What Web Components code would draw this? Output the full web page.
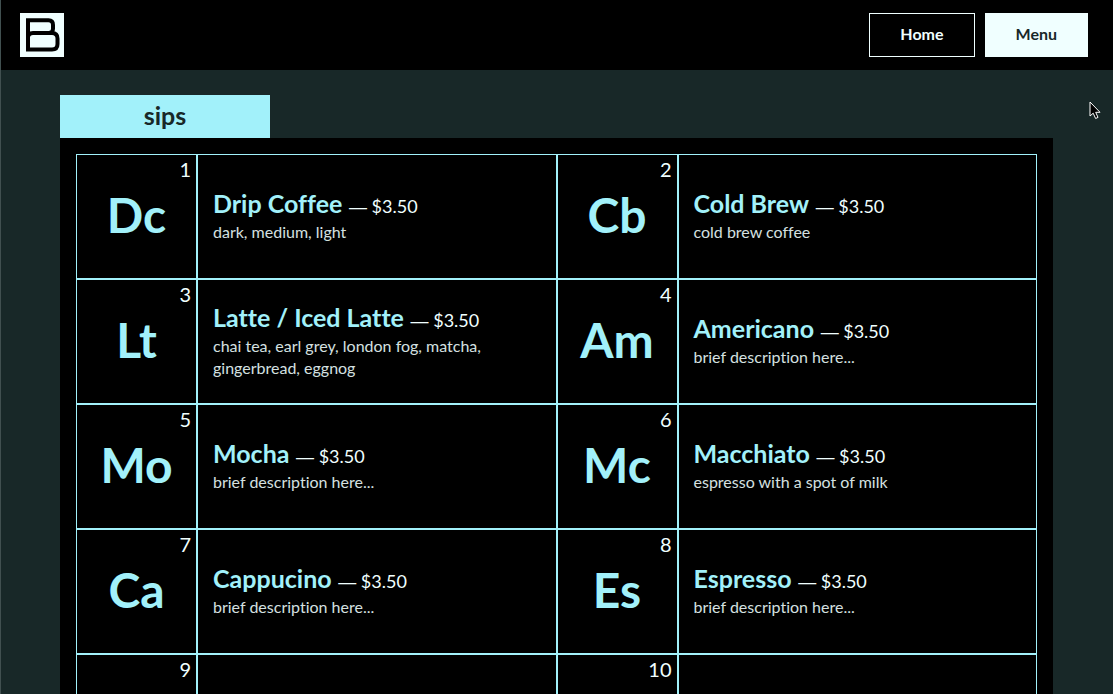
<!DOCTYPE html>
<html lang="en">
<head>
<meta charset="utf-8">
<title>Menu</title>
<style>
html { --ink: #182828; --cyan: #a2f1fa; --ice: #f0ffff; height: 100%; background: #182828; }
body { margin: 0; height: 100%; box-sizing: border-box; overflow: hidden; border-left: 1px solid #415050; font-family: Lato, "Liberation Sans", sans-serif; font-variant-ligatures: none; color: #f0ffff; }
</style>
</head>
<body>
<cafe-app></cafe-app>
<script>
const define = (name, html, setup) => {
  const template = document.createElement('template');
  template.innerHTML = html;
  customElements.define(name, class extends HTMLElement {
    constructor() {
      super();
      this.attachShadow({ mode: 'open' }).append(template.content.cloneNode(true));
    }
    connectedCallback() { if (setup) setup(this, this.shadowRoot); }
  });
};

define('cafe-logo', `
<style>
:host { display: block; }
a { display: block; width: 44px; height: 44px; background: var(--ice); }
svg { display: block; }
</style>
<a href="#home" aria-label="Home page"><svg width="44" height="44" viewBox="0 0 44 44" fill="none" stroke="#000" stroke-width="4">
<path d="M8 7.300H28.500Q33 7.300 33 12V15.500Q33 20 28.500 20H13Q8 20 8 24.500M8 5.300V36.500H32Q37.500 36.500 37.500 31V25.500Q37.500 20 32 20H28"/>
</svg></a>`);

define('nav-button', `
<style>
:host { display: block; }
button { display: block; height: 44px; padding: 0 30px 2px; border: 1px solid var(--ice); background: #000; color: var(--ice); font: bold 16px/20px Lato, "Liberation Sans", sans-serif; cursor: pointer; }
:host([active]) button { background: var(--ice); color: var(--ink); }
</style>
<button type="button"><slot></slot></button>`);

define('site-header', `
<style>
:host { display: block; background: #000; }
header { display: flex; align-items: center; justify-content: space-between; padding: 13px 25px 13px 19px; }
nav { display: flex; gap: 10px; }
</style>
<header><cafe-logo></cafe-logo><nav><nav-button>Home</nav-button><nav-button active>Menu</nav-button></nav></header>`);

define('menu-item', `
<style>
:host { display: grid; grid-template-columns: 121px 1fr; min-height: 125px; }
div { box-sizing: border-box; border: 1px solid var(--cyan); min-width: 0; }
.tile { position: relative; display: flex; align-items: center; justify-content: center; padding-bottom: 4px; color: var(--cyan); font-size: 48px; line-height: 56px; font-weight: bold; }
.number { position: absolute; top: 2px; right: 5px; color: var(--ice); font-size: 20px; line-height: 24px; font-weight: normal; }
.info { display: flex; flex-direction: column; justify-content: center; padding: 0 16px 2px 15px; }
h2 { margin: 0; color: var(--ice); font-size: 18px; line-height: 28px; font-weight: normal; }
b { margin-right: 2px; color: var(--cyan); font-size: 25px; }
.dash { font-family: "Liberation Sans", sans-serif; }
p { margin: 0; font-size: 16px; line-height: 22px; color: #d5e0e0; }
</style>
<div class="tile"><span class="number"></span><span class="symbol"></span></div>
<div class="info"></div>`, (host, root) => {
  root.querySelector('.number').textContent = host.getAttribute('number');
  root.querySelector('.symbol').textContent = host.getAttribute('symbol') || '';
  if (host.hasAttribute('name')) {
    root.querySelector('.info').innerHTML = '<h2><b></b> <span class="dash">—</span> <span class="price"></span></h2><p></p>';
    root.querySelector('b').textContent = host.getAttribute('name');
    root.querySelector('.price').textContent = host.getAttribute('price');
    root.querySelector('p').textContent = host.getAttribute('note');
  }
});

define('menu-section', `
<style>
:host { display: block; padding: 25px 60px 25px 59px; }
h1 { margin: 0; box-sizing: border-box; width: 210px; padding: 4px 0 7px; background: var(--cyan); color: var(--ink); text-align: center; font-size: 25px; line-height: 32px; font-weight: bold; }
.panel { background: #000; padding: 16px; display: grid; grid-template-columns: 1fr 1fr; }
</style>
<h1><slot name="title"></slot></h1>
<div class="panel"><slot></slot></div>`);

define('mouse-pointer', `
<style>
:host { position: absolute; top: 101px; right: 12px; width: 12px; height: 19px; pointer-events: none; }
svg { display: block; }
</style>
<svg width="12" height="19" viewBox="0 0 12 19" fill="#000" stroke="#fff" stroke-width="1"><path d="M1 1V15L4.200 12.200L6.600 17.500L9 16.400L6.700 11.300H11Z"/></svg>`);

define('cafe-app', `
<style>:host { display: block; }</style>
<site-header></site-header>
<main><menu-section>
<span slot="title">sips</span>
<menu-item number="1" symbol="Dc" name="Drip Coffee" price="$3.50" note="dark, medium, light"></menu-item>
<menu-item number="2" symbol="Cb" name="Cold Brew" price="$3.50" note="cold brew coffee"></menu-item>
<menu-item number="3" symbol="Lt" name="Latte / Iced Latte" price="$3.50" note="chai tea, earl grey, london fog, matcha, gingerbread, eggnog"></menu-item>
<menu-item number="4" symbol="Am" name="Americano" price="$3.50" note="brief description here..."></menu-item>
<menu-item number="5" symbol="Mo" name="Mocha" price="$3.50" note="brief description here..."></menu-item>
<menu-item number="6" symbol="Mc" name="Macchiato" price="$3.50" note="espresso with a spot of milk"></menu-item>
<menu-item number="7" symbol="Ca" name="Cappucino" price="$3.50" note="brief description here..."></menu-item>
<menu-item number="8" symbol="Es" name="Espresso" price="$3.50" note="brief description here..."></menu-item>
<menu-item number="9"></menu-item>
<menu-item number="10"></menu-item>
</menu-section></main>
<mouse-pointer></mouse-pointer>`);
</script>
</body>
</html>
